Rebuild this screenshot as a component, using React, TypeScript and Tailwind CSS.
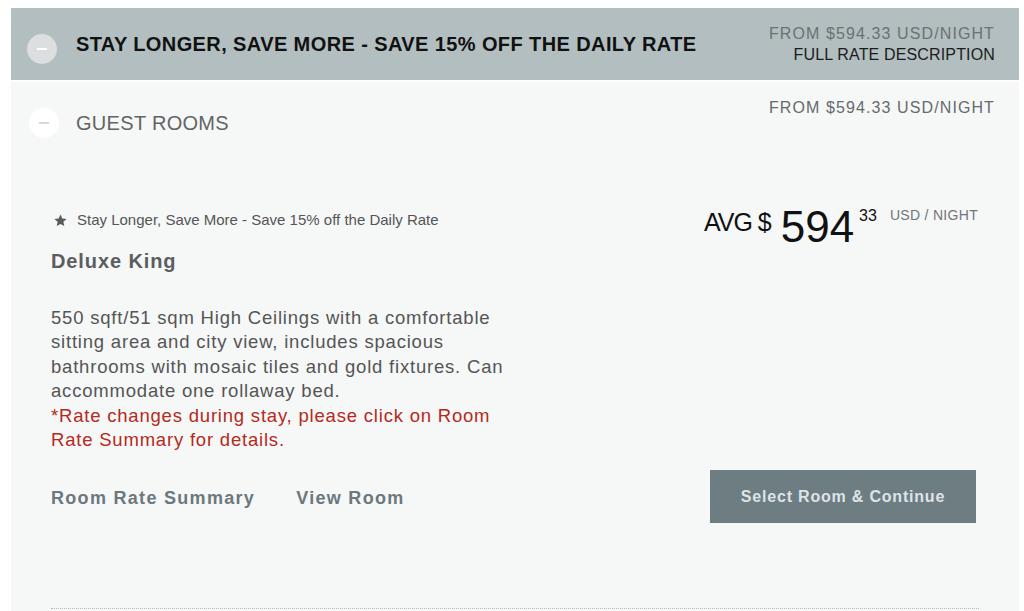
import React from 'react';

const font = { fontFamily: '"Liberation Sans", Arial, sans-serif' };

const Minus: React.FC<{ tone: 'dark' | 'light' }> = ({ tone }) => (
  <div
    className={`flex h-[30px] w-[30px] shrink-0 items-center justify-center rounded-full ${
      tone === 'dark' ? 'bg-[#dcdedf]' : 'bg-white'
    }`}
  >
    <div className={`h-[2px] w-[10px] ${tone === 'dark' ? 'bg-white' : 'bg-[#d6d9da]'}`} />
  </div>
);

const Star = () => (
  <svg viewBox="0 0 24 24" className="h-[15px] w-[15px] fill-[#5a5a5a]">
    <path d="M12 2.5l2.9 6.3 6.9.7-5.2 4.6 1.5 6.8L12 17.4l-6.1 3.5 1.5-6.8-5.2-4.6 6.9-.7z" />
  </svg>
);

export default function App() {
  return (
    <div className="min-h-screen bg-white pt-[8px]" style={font}>
      <div className="mx-[11px] w-[1008px]">
        {/* rate header */}
        <header className="flex h-[72px] items-center justify-between bg-[#b2bebf] pl-[16px] pr-[24px]">
          <div className="flex items-center gap-[19px]">
            <div className="mt-[10px]">
              <Minus tone="dark" />
            </div>
            <h1 className="text-[20px] font-bold tracking-[0.4px] text-[#111]">
              STAY LONGER, SAVE MORE - SAVE 15% OFF THE DAILY RATE
            </h1>
          </div>
          <div className="flex flex-col items-end text-[16px] leading-[21px]">
            <span className="tracking-[1.1px] text-[#6a7273]">FROM $594.33 USD/NIGHT</span>
            <span className="tracking-[0.15px] text-[#1c1c1c]">FULL RATE DESCRIPTION</span>
          </div>
        </header>

        <section className="mt-[2px] min-h-[540px] bg-[#f6f7f7]">
          {/* guest rooms row */}
          <div className="flex justify-between pl-[18px] pr-[24px] pt-[14px]">
            <div className="flex items-center gap-[17px] pt-[12px]">
              <Minus tone="light" />
              <h2 className="text-[20px] tracking-[0.3px] text-[#616565]">GUEST ROOMS</h2>
            </div>
            <span className="text-[16px] tracking-[1.1px] text-[#656b6c]">FROM $594.33 USD/NIGHT</span>
          </div>

          {/* room */}
          <div className="mx-[40px] mt-[63px] flex justify-between border-b border-dotted border-[#b8b8b8] pb-[85px]">
            <div className="w-[460px] pt-[8px]">
              <div className="flex items-center gap-[9px] pl-[2px] text-[15px] text-[#555]">
                <Star />
                <span>Stay Longer, Save More - Save 15% off the Daily Rate</span>
              </div>
              <h3 className="mt-[14px] text-[20px] font-bold tracking-[0.9px] text-[#5b5e60]">Deluxe King</h3>
              <p className="mt-[30px] w-[458px] text-[18.5px] leading-[24.6px] tracking-[0.8px] text-[#555]">
                550 sqft/51 sqm High Ceilings with a comfortable sitting area and city view, includes spacious
                bathrooms with mosaic tiles and gold fixtures. Can accommodate one rollaway bed.
                <br />
                <span className="text-[#b42a20]">
                  *Rate changes during stay, please click on Room Rate Summary for details.
                </span>
              </p>
              <div className="mt-[32px] flex gap-[41px] text-[18px] font-bold tracking-[1.3px] text-[#6c787c]">
                <span>Room Rate Summary</span>
                <span>View Room</span>
              </div>
            </div>

            <div className="flex flex-col items-end">
              <div className="mr-[1px] flex items-start text-[#111]">
                <span className="mt-[3px] text-[25px] tracking-[-1px]">AVG $</span>
                <span className="ml-[10px] text-[44px] leading-[52px]">594</span>
                <span className="ml-[5px] mt-[3px] text-[16px]">33</span>
                <span className="ml-[13px] mt-[4px] text-[14px] tracking-[0.3px] text-[#717677]">USD / NIGHT</span>
              </div>
              <button className="mr-[3px] mt-[217px] h-[53px] w-[266px] bg-[#6e7d82] text-[16px] font-bold tracking-[0.8px] text-[#dde4e7]">
                Select Room &amp; Continue
              </button>
            </div>
          </div>
        </section>
      </div>
    </div>
  );
}
